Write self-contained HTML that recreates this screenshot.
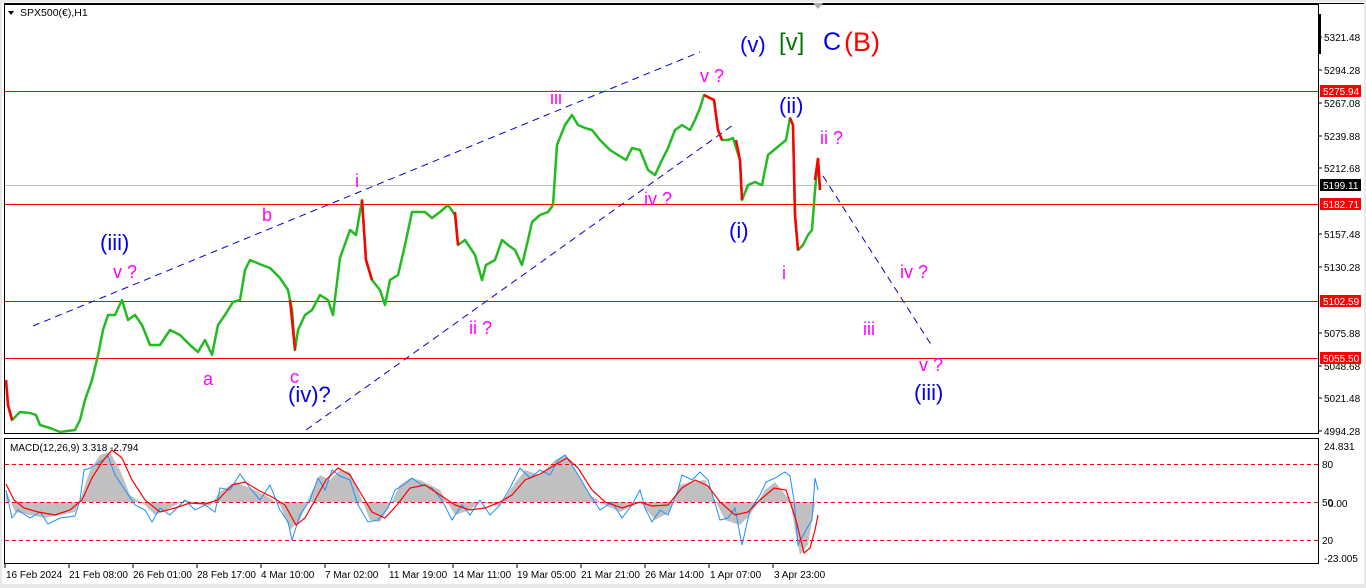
<!DOCTYPE html>
<html><head><meta charset="utf-8"><style>
html,body{margin:0;padding:0;background:#f0f0f0;}
svg{display:block;}
text{font-family:"Liberation Sans",sans-serif;}
</style></head><body>
<svg width="1366" height="588" viewBox="0 0 1366 588" xmlns="http://www.w3.org/2000/svg">
<rect x="0" y="0" width="1366" height="588" fill="#e8e8e8"/>
<rect x="2" y="2" width="1362" height="582" fill="#fff"/>
<rect x="4.5" y="4.5" width="1314" height="429" fill="#fff" stroke="#000" stroke-width="1"/>
<rect x="4.5" y="438.5" width="1314" height="125" fill="#fff" stroke="#000" stroke-width="1"/>
<line x1="4" y1="3.5" x2="1364" y2="3.5" stroke="#000"/>
<rect x="1318" y="14" width="3" height="40" fill="#000"/>
<polygon points="813,3 823,3 818,9" fill="#aaa"/>
<polygon points="8,11 14,11 11,15" fill="#000"/>
<text x="20" y="16" font-size="10.5" fill="#000">SPX500(€),H1</text>
<g stroke="#ff0000" stroke-width="1">
<line x1="5" y1="91.5" x2="1318" y2="91.5"/>
<line x1="5" y1="204.5" x2="1318" y2="204.5"/>
<line x1="5" y1="301.5" x2="1318" y2="301.5"/>
<line x1="5" y1="358.5" x2="1318" y2="358.5"/>
</g>
<line x1="5" y1="185.5" x2="1318" y2="185.5" stroke="#c0c0c0"/>
<g stroke="#0000cc" stroke-width="1" stroke-dasharray="7,5" fill="none">
<line x1="33" y1="326" x2="700" y2="52"/>
<line x1="306" y1="430" x2="733" y2="125"/>
<line x1="823" y1="176" x2="932" y2="346"/>
</g>
<polyline fill="none" stroke="#22bb22" stroke-width="2.5" stroke-linejoin="round" points="6,380 8,405 12,420 20,412 30,413 36,415 40,425 50,428 60,432 75,430 80,420 85,400 92,380 98,355 103,330 108,315 115,315 122,300 128,320 135,315 142,325 150,345 160,345 170,330 180,335 190,345 198,352 205,340 212,355 218,325 225,315 233,302 240,300 245,270 250,260 262,265 270,268 280,278 288,290 292,310 295,350 298,330 305,315 312,310 320,295 328,300 333,315 340,258 350,230 356,235 362,200 366,260 372,280 380,290 385,305 390,280 398,275 405,245 412,212 425,212 432,218 440,212 448,205 455,215 458,245 465,240 475,255 482,280 486,265 495,260 502,240 508,245 515,250 522,265 528,240 532,222 540,215 548,212 553,205 557,145 565,125 572,115 578,125 585,128 592,130 600,140 610,150 618,155 626,160 632,148 640,150 648,170 655,175 662,160 668,148 675,130 682,125 690,130 695,120 700,108 704,95 710,98 714,100 718,130 722,140 728,140 733,138 740,160 742,200 748,185 755,182 762,185 768,155 774,150 780,145 786,140 790,118 793,125 795,215 798,250 803,245 808,235 812,230 815,190 818,160 820,190"/>
<g stroke="#ff0000" stroke-width="2.5" fill="none">
<polyline points="704,95 710,98 714,100 718,130 722,140"/>
<polyline points="736,140 740,160 742,200"/>
<polyline points="790,118 793,125 795,215 798,250"/>
<polyline points="362,200 366,260 372,280"/>
<polyline points="290,300 295,350"/>
<polyline points="455,212 458,245"/>
<polyline points="815,180 818,158 820,190"/>
<polyline points="6,380 8,405 12,420"/>
</g>
<g font-size="18" fill="#ff00ff">
<text x="113" y="278">v ?</text>
<text x="262" y="221">b</text>
<text x="355" y="187">i</text>
<text x="203" y="385">a</text>
<text x="290" y="383">c</text>
<text x="469" y="334">ii ?</text>
<text x="550" y="104">iii</text>
<text x="644" y="205">iv ?</text>
<text x="700" y="82">v ?</text>
<text x="820" y="144">ii ?</text>
<text x="782" y="279">i</text>
<text x="900" y="278">iv ?</text>
<text x="863" y="335">iii</text>
<text x="919" y="371">v ?</text>
</g>
<g font-size="22" fill="#0000ee">
<text x="100" y="250">(iii)</text>
<text x="288" y="402">(iv)?</text>
<text x="740" y="52">(v)</text>
<text x="779" y="113">(ii)</text>
<text x="729" y="238">(i)</text>
<text x="914" y="400">(iii)</text>
<text x="823" y="50" font-size="25">C</text>
</g>
<text x="779" y="50" font-size="24" fill="#007700">[v]</text>
<text x="844" y="51" font-size="27" fill="#ff0000">(B)</text>
<g font-size="10" fill="#000">
<g stroke="#000"><line x1="1318" y1="37" x2="1322" y2="37"/><line x1="1318" y1="70" x2="1322" y2="70"/><line x1="1318" y1="103" x2="1322" y2="103"/><line x1="1318" y1="136" x2="1322" y2="136"/><line x1="1318" y1="168" x2="1322" y2="168"/><line x1="1318" y1="234" x2="1322" y2="234"/><line x1="1318" y1="267" x2="1322" y2="267"/><line x1="1318" y1="333" x2="1322" y2="333"/><line x1="1318" y1="366" x2="1322" y2="366"/><line x1="1318" y1="398" x2="1322" y2="398"/><line x1="1318" y1="431" x2="1322" y2="431"/></g>
<text x="1324" y="41">5321.48</text>
<text x="1324" y="74">5294.28</text>
<text x="1324" y="107">5267.08</text>
<text x="1324" y="140">5239.88</text>
<text x="1324" y="172">5212.68</text>
<text x="1324" y="238">5157.48</text>
<text x="1324" y="271">5130.28</text>
<text x="1324" y="337">5075.88</text>
<text x="1324" y="370">5048.68</text>
<text x="1324" y="402">5021.48</text>
<text x="1324" y="435">4994.28</text>
</g>
<g font-size="10" fill="#fff">
<rect x="1320" y="85" width="41" height="12" fill="#ff0000"/><text x="1323" y="95">5275.94</text>
<rect x="1320" y="179" width="41" height="12" fill="#000"/><text x="1323" y="189">5199.11</text>
<rect x="1320" y="198" width="41" height="12" fill="#ff0000"/><text x="1323" y="208">5182.71</text>
<rect x="1320" y="295" width="41" height="12" fill="#ff0000"/><text x="1323" y="305">5102.59</text>
<rect x="1320" y="352" width="41" height="12" fill="#ff0000"/><text x="1323" y="362">5055.50</text>
</g>
<text x="10" y="451" font-size="10" fill="#000">MACD(12,26,9) 3.318 -2.794</text>
<polygon fill="#c0c0c0" points="6,502 6,490 15,512 30,515 45,518 60,515 75,512 82,495 90,470 100,455 110,452 120,470 130,495 145,505 155,515 170,508 185,500 195,503 210,506 220,492 235,482 250,488 265,495 280,505 290,530 300,520 310,495 320,475 330,480 340,470 350,472 360,495 370,520 380,522 390,505 400,485 410,478 420,480 440,490 455,515 470,510 480,502 500,506 510,490 525,470 540,475 555,460 565,455 575,470 590,495 605,505 620,512 640,502 655,520 670,512 680,485 690,482 705,480 715,500 725,520 740,525 750,515 765,490 775,482 790,500 795,530 800,555 808,545 812,520 816,500 818,502"/>
<g stroke="#ff0000" stroke-dasharray="4,3" stroke-width="1">
<line x1="5" y1="464.5" x2="1318" y2="464.5"/>
<line x1="5" y1="502.5" x2="1318" y2="502.5"/>
<line x1="5" y1="540.5" x2="1318" y2="540.5"/>
</g>
<polyline fill="none" stroke="#1e90ff" stroke-width="1" points="6,490 12,518 18,510 30,518 40,512 48,524 60,518 75,516 80,500 84,470 90,468 100,462 108,456 115,475 125,490 135,505 145,510 152,522 160,508 170,515 185,500 195,510 205,505 215,512 220,488 230,490 240,474 250,488 260,500 270,485 280,510 288,522 292,540 300,515 310,500 318,478 325,490 332,470 340,476 350,480 358,505 368,522 378,520 388,508 395,490 405,484 412,478 420,484 432,488 442,500 452,520 462,505 470,515 480,500 490,515 500,505 510,488 520,468 530,478 540,470 550,475 558,460 565,455 572,465 580,478 590,495 600,510 612,502 622,518 632,505 640,490 645,508 652,522 660,510 668,515 678,490 682,475 692,480 700,472 708,480 714,500 720,520 728,518 735,508 742,545 750,510 760,495 766,482 775,478 785,472 790,476 794,500 798,545 806,530 812,520 815,478 818,490"/>
<polyline fill="none" stroke="#ff0000" stroke-width="1.2" points="6,484 14,500 24,508 38,512 55,515 70,510 82,500 92,478 102,462 112,450 122,458 132,480 145,500 160,512 175,508 190,503 205,504 218,500 232,485 245,482 258,490 272,497 285,505 296,525 305,518 315,500 326,480 338,468 350,475 360,492 372,512 385,518 397,505 410,488 425,485 440,495 455,505 470,510 485,508 500,502 512,495 525,480 540,474 555,465 567,458 578,468 592,490 605,502 622,508 640,502 652,506 668,505 682,488 695,480 708,486 720,502 735,515 748,512 760,500 774,488 786,490 796,520 804,553 810,548 815,530 818,515"/>
<g font-size="10" fill="#000">
<text x="1324" y="450">24.831</text>
<text x="1322" y="468">80</text>
<text x="1322" y="506">50</text>
<text x="1328" y="507">0.00</text>
<text x="1322" y="544">20</text>
<text x="1324" y="562">-23.005</text>
</g>
<g stroke="#000"><line x1="5" y1="564" x2="5" y2="568"/><line x1="69" y1="564" x2="69" y2="568"/><line x1="133" y1="564" x2="133" y2="568"/><line x1="197" y1="564" x2="197" y2="568"/><line x1="261" y1="564" x2="261" y2="568"/><line x1="325" y1="564" x2="325" y2="568"/><line x1="389" y1="564" x2="389" y2="568"/><line x1="453" y1="564" x2="453" y2="568"/><line x1="517" y1="564" x2="517" y2="568"/><line x1="581" y1="564" x2="581" y2="568"/><line x1="645" y1="564" x2="645" y2="568"/><line x1="709" y1="564" x2="709" y2="568"/><line x1="773" y1="564" x2="773" y2="568"/></g>
<g font-size="10" fill="#000">
<text x="6" y="578">16 Feb 2024</text>
<text x="69" y="578">21 Feb 08:00</text>
<text x="133" y="578">26 Feb 01:00</text>
<text x="197" y="578">28 Feb 17:00</text>
<text x="261" y="578">4 Mar 10:00</text>
<text x="325" y="578">7 Mar 02:00</text>
<text x="389" y="578">11 Mar 19:00</text>
<text x="453" y="578">14 Mar 11:00</text>
<text x="517" y="578">19 Mar 05:00</text>
<text x="581" y="578">21 Mar 21:00</text>
<text x="645" y="578">26 Mar 14:00</text>
<text x="710" y="578">1 Apr 07:00</text>
<text x="774" y="578">3 Apr 23:00</text>
</g>
<rect x="0" y="584" width="1366" height="4" fill="#e8e8e8"/>
</svg>
</body></html>
